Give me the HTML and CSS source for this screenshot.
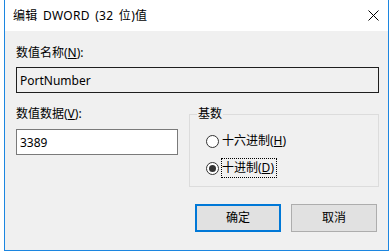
FILE: index.html
```html
<!DOCTYPE html>
<html lang="zh-CN">
<head>
    <meta charset="UTF-8">
    <title>编辑 DWORD (32 位)值</title>
    <link rel="stylesheet" href="styles.css">
</head>
<body>
    <div class="window">
        <div class="titlebar">
            <span class="title">编辑 DWORD (32 位)值</span>
            <button class="close-btn">
                <svg viewBox="0 0 11 11" width="11" height="11">
                    <path d="M0.5 0.5L10.5 10.5M10.5 0.5L0.5 10.5"/>
                </svg>
            </button>
        </div>

        <div class="content">
            <!-- Value name -->
            <label class="field-label" for="valueName">数值名称(<u>N</u>):</label>
            <input class="textbox readonly name-box" id="valueName" type="text" value="PortNumber" readonly>

            <div class="row">
                <!-- Value data -->
                <div class="col">
                    <label class="field-label" for="valueData">数值数据(<u>V</u>):</label>
                    <input class="textbox data-box" id="valueData" type="text" value="3389">
                </div>

                <!-- Base -->
                <fieldset class="base-group">
                    <legend>基数</legend>
                    <label class="radio">
                        <span class="radio-circle"></span>
                        <span class="radio-text">十六进制(<u>H</u>)</span>
                    </label>
                    <label class="radio checked">
                        <span class="radio-circle"></span>
                        <span class="radio-text focus">十进制(<u>D</u>)</span>
                    </label>
                </fieldset>
            </div>

            <div class="buttons">
                <button class="btn btn-default">确定</button>
                <button class="btn">取消</button>
            </div>
        </div>
    </div>
</body>
</html>
```

FILE: styles.css
```css
* {
    margin: 0;
    padding: 0;
    box-sizing: border-box;
}

body {
    width: 390px;
    height: 252px;
    overflow: hidden;
    padding-left: 4px;
    background: #fff;
    color: #000;
    font-family: "Microsoft YaHei UI", "Noto Sans", "Noto Sans CJK SC", sans-serif;
    font-size: 12px;
    line-height: 16px;
}

.window {
    width: 385px;
    height: 251px;
    border: 1px solid #1c86e0;
    border-top: none;
    display: flex;
    flex-direction: column;
    background: #f0f0f0;
}

/* Title bar */
.titlebar {
    height: 31px;
    flex-shrink: 0;
    background: #fff;
    display: flex;
    align-items: center;
    justify-content: space-between;
    padding-left: 8px;
    padding-right: 9px;
}

.title {
    word-spacing: 2px;
    letter-spacing: 0.3px;
}

.close-btn {
    border: none;
    background: none;
    display: flex;
    align-items: center;
}

.close-btn svg path {
    stroke: #000;
    stroke-width: 1;
    fill: none;
}

/* Content */
.content {
    flex: 1;
    padding: 14px 9px 0 11px;
}

.field-label {
    display: block;
}

.textbox {
    display: block;
    height: 26px;
    padding: 0 3px;
    border: 1px solid #7a7a7a;
    background: #fff;
    font: inherit;
    color: #000;
    outline: none;
}

.textbox.readonly {
    background: #f0f0f0;
    border-color: #1e1e1e;
}

.name-box {
    width: 100%;
    margin-top: 6px;
}

.row {
    display: grid;
    grid-template-columns: 162px 1fr;
    column-gap: 11px;
    margin-top: 13px;
}

.data-box {
    width: 100%;
    margin-top: 7px;
}

/* Base group */
.base-group {
    border: 1px solid #dcdcdc;
    padding: 0 0 8px 7px;
    min-width: 0;
}

.base-group legend {
    padding: 0 1px;
}

.radio {
    display: flex;
    align-items: center;
    height: 20px;
    margin-top: 9px;
    margin-left: 9px;
}

.radio + .radio {
    margin-top: 7px;
}

.radio-circle {
    width: 13px;
    height: 13px;
    border: 1px solid #333;
    border-radius: 50%;
    background: #fff;
    display: flex;
    align-items: center;
    justify-content: center;
}

.radio.checked .radio-circle::after {
    content: "";
    width: 7px;
    height: 7px;
    border-radius: 50%;
    background: #333;
}

.radio-text {
    margin-left: 2px;
    padding: 0 2px 0 0;
    line-height: 18px;
    border: 1px dotted transparent;
}

.radio-text.focus {
    border-color: #000;
}

/* Buttons */
.buttons {
    display: flex;
    justify-content: flex-end;
    gap: 10px;
    margin-top: 17px;
    padding-right: 2px;
}

.btn {
    width: 86px;
    height: 28px;
    border: 1px solid #adadad;
    background: #e1e1e1;
    font: inherit;
    color: #000;
}

.btn-default {
    border: 2px solid #0078d7;
}
```
